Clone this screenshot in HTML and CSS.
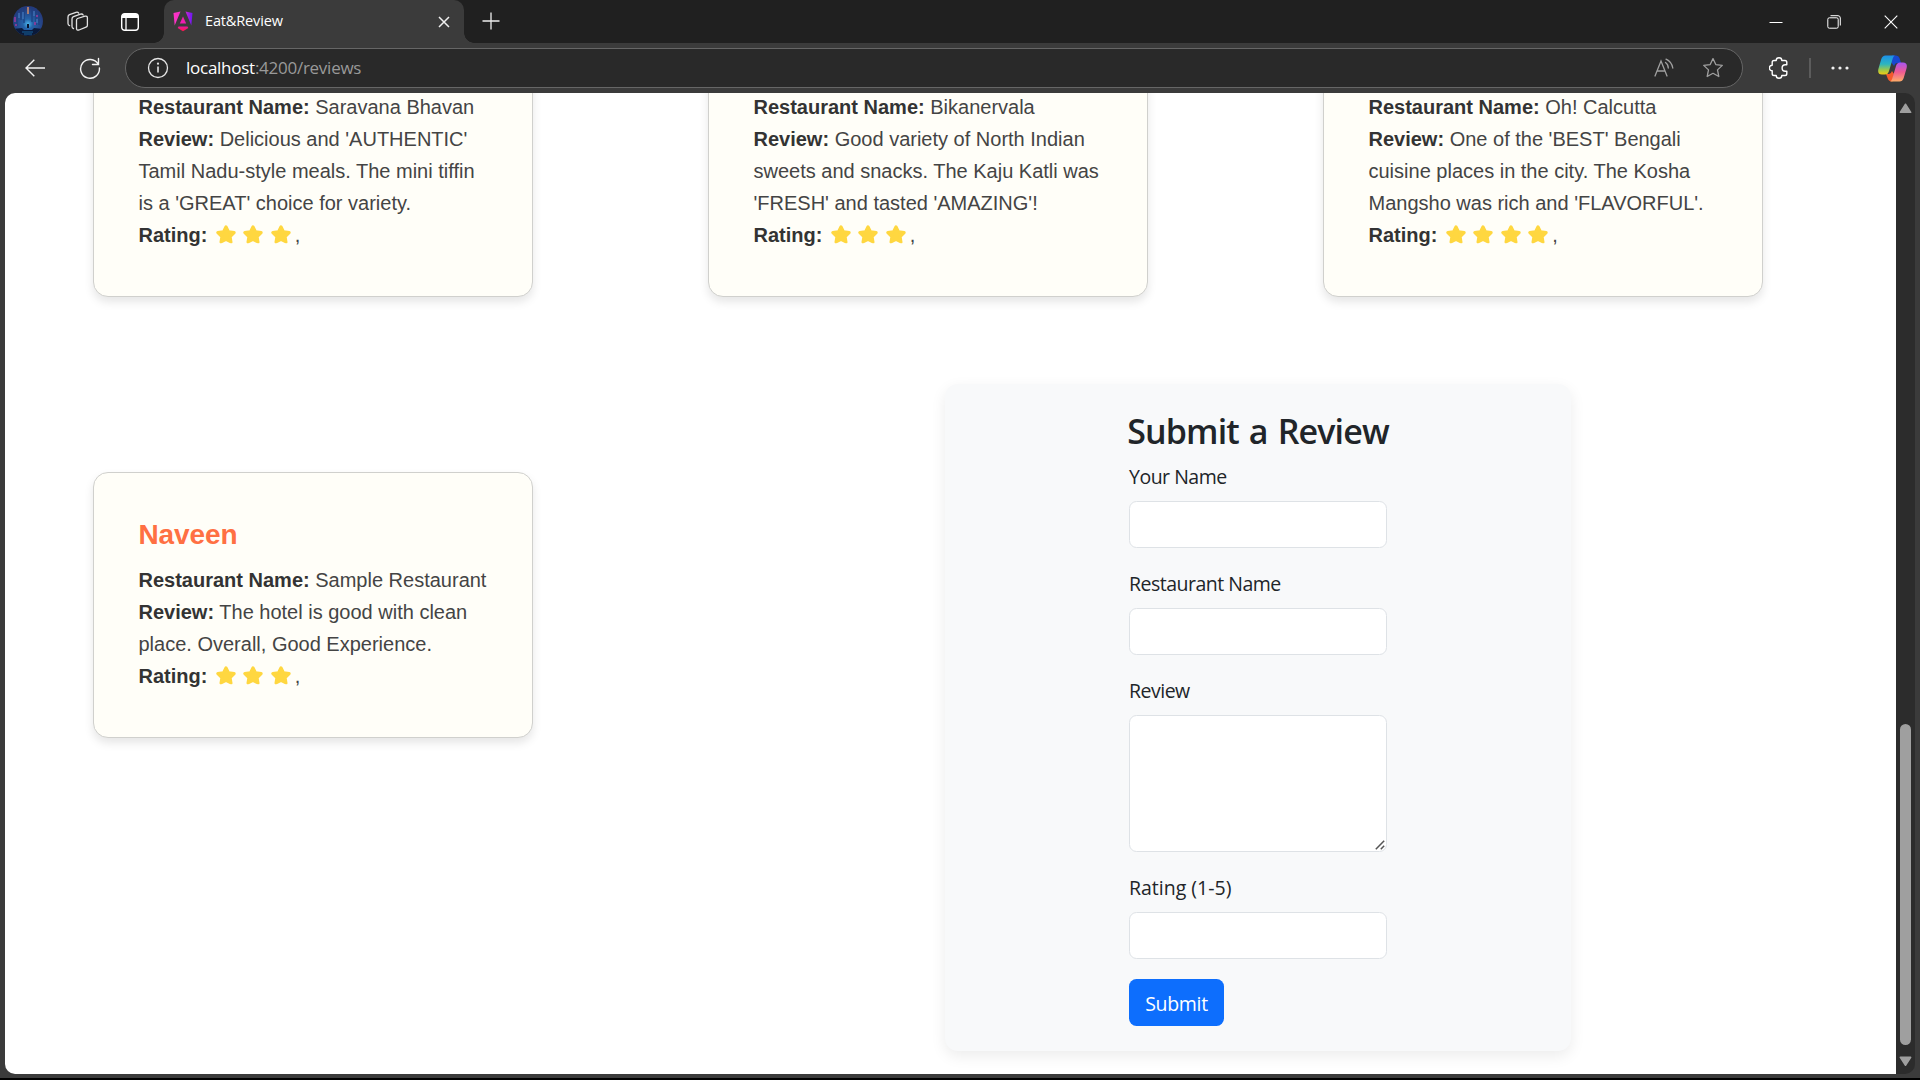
FILE: index.html
```html
<!DOCTYPE html>
<html lang="en">
<head>
<meta charset="utf-8">
<title>Eat&amp;Review</title>
<link rel="stylesheet" href="styles.css">
</head>
<body>
<svg class="defs" width="0" height="0">
  <symbol id="star" viewBox="0 0 20 18.500"><path d="M10 1.800l2.500 4.900 5.700.9-4.100 4 .9 5.400-5-2.500-5 2.500.9-5.400-4.100-4 5.700-.9z" fill="currentColor" stroke="currentColor" stroke-width="3" stroke-linejoin="round"/></symbol>
</svg>
<div class="browser">
  <header class="tabstrip">
    <svg class="avatar" width="30" height="30" viewBox="0 0 30 30">
      <defs><clipPath id="disc"><circle cx="15" cy="15" r="15"/></clipPath>
      <radialGradient id="glow" cx=".5" cy=".6" r=".55"><stop offset="0" stop-color="#4bb4ea"/><stop offset=".3" stop-color="#2462a8"/><stop offset="1" stop-color="#26397a"/></radialGradient></defs>
      <g clip-path="url(#disc)"><rect width="30" height="30" fill="url(#glow)"/>
      <path d="M4 3v17M8 0v14M11 2v15M19 1v15M23 2v17M26 5v14" stroke="#1c4080" stroke-width="1.200"/>
      <path d="M15 1v7" stroke="#a77b70" stroke-width="2"/><path d="M6 7v5M21 5v5M24 13v4M10 6v7" stroke="#4b83c9"/>
      <path d="M2 11v5M3 18v2M24 9v2M22 16v3" stroke="#a13a9b" stroke-width="1.500"/>
      <path d="M0 23l9-1 2 2h8l2-2 9 1v7H0z" fill="#0a1a3a"/><path d="M9 26h11M11 28h8" stroke="#17629a"/><path d="M14 18h2v4h-2z" fill="#07142f"/></g>
    </svg>
    <svg class="workspaces" width="22" height="22" viewBox="0 0 22 22"><g fill="none" stroke="#e2e2e2" stroke-width="1.300" stroke-linejoin="round" stroke-linecap="round"><path d="M10.500 7.500l7.500-2.300q2.400-.5 2.400 1.700v7.300q0 1.500-1.400 2l-7 2.800q-2.500.7-2.500-1.700V9.300q0-1.400 1-1.800z"/><path d="M6.500 17.500q-1.500-.3-1.500-2V8q0-1.700 1.500-2.300l7-2.500q1.800-.6 2.700.8"/><path d="M2.600 14.600Q1 14.300 1 12.600V6q0-1.700 1.500-2.300l6.500-2.400q1.800-.6 2.700.8"/></g></svg>
    <svg class="tabactions" width="18" height="18" viewBox="0 0 18 18"><rect x=".7" y=".7" width="16.600" height="16.600" rx="3" fill="none" stroke="#fff" stroke-width="1.400"/><path d="M1 5V3q0-2 2-2h12q2 0 2 2v2z" fill="#fff"/><path d="M5 5v12" stroke="#fff" stroke-width="1.300"/></svg>
    <div class="tab">
      <svg width="20" height="21" viewBox="0 0 20 21"><defs><linearGradient id="ng" x1="0" y1="0" x2="1" y2="0"><stop offset="0" stop-color="#ff35c4"/><stop offset=".5" stop-color="#e82ac8"/><stop offset="1" stop-color="#6a16f5"/></linearGradient><linearGradient id="nb" x1="0" y1="0" x2="0" y2="1"><stop offset="0" stop-color="#e818a0"/><stop offset="1" stop-color="#ff1744"/></linearGradient></defs>
      <path d="M.5 2L7.500.4 1.700 14.500zM12.500.4L19.500 2l-1.200 12.500z" fill="url(#ng)"/><path d="M10 5.500l3.200 7H6.800z" fill="#f01eb0"/><path d="M5.500 15.500h9l.8 1.600L10 20.300l-5.300-3.200z" fill="url(#nb)"/></svg>
      <span class="tab-title">Eat&amp;Review</span>
      <svg class="tab-close" width="12" height="12" viewBox="0 0 12 12"><path d="M1 1l10 10M11 1L1 11" stroke="#f0f0f0" stroke-width="1.500"/></svg>
    </div>
    <svg class="newtab" width="18" height="18" viewBox="0 0 18 18"><path d="M9 .5v17M.5 9h17" stroke="#eee" stroke-width="1.300"/></svg>
    <div class="window-controls">
      <svg width="14" height="14" viewBox="0 0 14 14"><path d="M.5 7.500h13" stroke="#fff"/></svg>
      <svg width="14" height="14" viewBox="0 0 14 14"><g fill="none" stroke="#fff"><rect x=".8" y="2.800" width="10.400" height="10.400" rx="1.500"/><path d="M3.500.7h7.500q2.300 0 2.300 2.300v7.500"/></g></svg>
      <svg width="14" height="14" viewBox="0 0 14 14"><path d="M.7.7l12.600 12.600M13.300.7L.7 13.300" stroke="#fff" stroke-width="1.100"/></svg>
    </div>
  </header>
  <nav class="toolbar">
    <svg class="back" width="20" height="18" viewBox="0 0 20 18"><path d="M9.300.7L1 9l8.300 8.300M1 9h19" fill="none" stroke="#f2f2f2" stroke-width="1.400"/></svg>
    <svg class="reload" width="22" height="22" viewBox="0 0 22 22"><path d="M19.200 7.200A9.400 9.400 0 1 0 20.400 11M19.500 1.500v6h-6" fill="none" stroke="#f2f2f2" stroke-width="1.400" stroke-linecap="round"/></svg>
    <div class="address">
      <svg width="22" height="22" viewBox="0 0 22 22"><circle cx="11" cy="11" r="9.500" fill="none" stroke="#e5e5e5" stroke-width="1.300"/><path d="M11 9.500v6" stroke="#e5e5e5" stroke-width="1.600"/><circle cx="11" cy="6.700" r="1.100" fill="#e5e5e5"/></svg>
      <span class="url"><b>localhost</b>:4200/reviews</span>
      <svg class="read" width="20" height="20" viewBox="0 0 20 20"><g fill="none" stroke="#a0a0a0" stroke-width="1.300" stroke-linecap="round"><path d="M1 18L7 3l6 15M3 13h8"/><path d="M11.500 4.500q2.800 2 2.800 5.500M12 1.200q5.700 2.600 6.800 8.800"/></g></svg>
      <svg class="favorite" width="22" height="22" viewBox="0 0 22 22"><path d="M11 1.600l2.800 6 6.500.8-4.800 4.500 1.300 6.600L11 16.300l-5.800 3.200 1.300-6.600-4.800-4.500 6.500-.8z" fill="none" stroke="#a0a0a0" stroke-width="1.300" stroke-linejoin="round"/></svg>
    </div>
    <svg class="extensions" width="20" height="22" viewBox="0 0 20 22"><path d="M5 3.500h2.200a2.800 2.800 0 0 1 5.600 0H16q1.800 0 1.800 1.800v2.500h-1.500a3.200 3.200 0 0 0 0 6.400h1.500v2.500q0 1.800-1.800 1.800h-3.200a2.800 2.800 0 0 1-5.600 0H5q-1.800 0-1.800-1.800v-2.900a2.800 2.800 0 0 1 0-5.600V5.300q0-1.800 1.800-1.800z" fill="none" stroke="#fff" stroke-width="1.400" stroke-linejoin="round"/></svg>
    <span class="divider"></span>
    <svg class="more" width="18" height="4" viewBox="0 0 18 4"><g fill="#f2f2f2"><circle cx="2" cy="2" r="1.600"/><circle cx="9" cy="2" r="1.600"/><circle cx="16" cy="2" r="1.600"/></g></svg>
    <svg class="copilot" width="29" height="27" viewBox="0 0 29 27"><defs><linearGradient id="ca" x1="0" y1="0" x2="0" y2="1"><stop offset="0" stop-color="#1c8fe8"/><stop offset=".45" stop-color="#2cb5c0"/><stop offset=".75" stop-color="#9bc84c"/><stop offset="1" stop-color="#f2cb12"/></linearGradient><linearGradient id="cb" x1="0" y1="0" x2="0" y2="1"><stop offset="0" stop-color="#a855f2"/><stop offset=".5" stop-color="#ef5a93"/><stop offset="1" stop-color="#ffad68"/></linearGradient></defs>
      <path d="M14 .5h4q2.700 0 3.500 2.500l1.500 5h-4q-2 0-3 3L13 7z" fill="#1848d0"/><path d="M8 19h3q2 0 3-3l2 3-1.500 7.500q-3.800.2-4.800-3z" fill="#f45a2c"/>
      <path d="M7.500.5h9.300q-1.300.5-2 2.700L11 16q-1 3.500-4 3.500H4q-5 0-3.500-6L3.300 4Q4.500.5 7.500.5z" fill="url(#ca)"/><path d="M21.500 26.500h-9.300q1.300-.5 2-2.700L18 11q1-3.500 4-3.500h3q5 0 3.500 6L25.700 23q-1.200 3.500-4.200 3.500z" fill="url(#cb)"/></svg>
  </nav>
  <div class="window">
    <main class="page">
      <section class="cards">
        <article class="card"><p><strong>Restaurant Name:</strong> Saravana Bhavan<br><strong>Review:</strong> Delicious and 'AUTHENTIC'<br>Tamil Nadu-style meals. The mini tiffin<br>is a 'GREAT' choice for variety.</p>
          <div class="rating"><strong>Rating:</strong><span class="stars"><svg><use href="#star"/></svg><svg><use href="#star"/></svg><svg><use href="#star"/></svg></span>,</div></article>
        <article class="card"><p><strong>Restaurant Name:</strong> Bikanervala<br><strong>Review:</strong> Good variety of North Indian<br>sweets and snacks. The Kaju Katli was<br>'FRESH' and tasted 'AMAZING'!</p>
          <div class="rating"><strong>Rating:</strong><span class="stars"><svg><use href="#star"/></svg><svg><use href="#star"/></svg><svg><use href="#star"/></svg></span>,</div></article>
        <article class="card"><p><strong>Restaurant Name:</strong> Oh! Calcutta<br><strong>Review:</strong> One of the 'BEST' Bengali<br>cuisine places in the city. The Kosha<br>Mangsho was rich and 'FLAVORFUL'.</p>
          <div class="rating"><strong>Rating:</strong><span class="stars"><svg><use href="#star"/></svg><svg><use href="#star"/></svg><svg><use href="#star"/></svg><svg><use href="#star"/></svg></span>,</div></article>
      </section>
      <section class="lower">
        <article class="card"><h3>Naveen</h3><p><strong>Restaurant Name:</strong> Sample Restaurant<br><strong>Review:</strong> The hotel is good with clean<br>place. Overall, Good Experience.</p>
          <div class="rating"><strong>Rating:</strong><span class="stars"><svg><use href="#star"/></svg><svg><use href="#star"/></svg><svg><use href="#star"/></svg></span>,</div></article>
        <form class="review-form">
          <h2>Submit a Review</h2>
          <label for="name">Your Name</label><input id="name" type="text">
          <label for="restaurant">Restaurant Name</label><input id="restaurant" type="text">
          <label for="review">Review</label>
          <div class="textarea"><textarea id="review"></textarea><svg class="grip" width="10" height="10" viewBox="0 0 10 10"><path d="M.8 9.200L9.200.8M5.800 9.200L9.200 5.800" stroke="#555" stroke-width="1.500"/></svg></div>
          <label class="rating-label" for="rating">Rating (1-5)</label><input id="rating" type="text">
          <button type="button">Submit</button>
        </form>
      </section>
    </main>
    <aside class="scrollbar">
      <svg width="13" height="11" viewBox="0 0 13 11"><path d="M6.500 1.200L11.700 9.300H1.300z" fill="#9f9f9f" stroke="#9f9f9f" stroke-width="1.500" stroke-linejoin="round"/></svg>
      <span class="thumb"></span>
      <svg width="13" height="11" viewBox="0 0 13 11"><path d="M6.500 9.300L11.700 1.300H1.300z" fill="#9f9f9f" stroke="#9f9f9f" stroke-width="1.500" stroke-linejoin="round"/></svg>
    </aside>
  </div>
</div>
</body>
</html>
```
FILE: styles.css
```css
* { box-sizing: border-box; }
body { margin: 0; background: #000; overflow: hidden; }
svg { display: block; flex: none; }
.defs { position: absolute; }
h2, h3, p { margin: 0; }

.browser { width: 1920px; height: 1078px; background: #3b3b3b; display: flex; flex-direction: column; font-family: "Open Sans", "Noto Sans", sans-serif; }

.tabstrip { height: 43px; background: #202020; display: flex; align-items: center; padding-left: 13px; }
.avatar { margin-bottom: 1px; }
.workspaces { margin-left: 24px; }
.tabactions { margin-left: 32px; }
.tab { position: relative; width: 300px; height: 43px; margin-left: 25px; padding: 0 14px 0 9px; border-radius: 10px 10px 0 0; background: #3b3b3b; display: flex; align-items: center; color: #fff; }
.tab::before, .tab::after { content: ""; position: absolute; bottom: 0; width: 10px; height: 10px; }
.tab::before { left: -10px; background: radial-gradient(circle at 0 0, transparent 9.500px, #3b3b3b 10px); }
.tab::after { right: -10px; background: radial-gradient(circle at 100% 0, transparent 9.500px, #3b3b3b 10px); }
.tab-title { margin-left: 12px; font-size: 14.500px; letter-spacing: -.15px; line-height: 20px; padding-bottom: 2px; }
.tab-close { margin-left: auto; }
.newtab { margin: 0 0 2px 18px; }
.window-controls { margin-left: auto; padding-right: 22px; display: flex; gap: 43.500px; }

.toolbar { height: 50px; display: flex; align-items: center; padding-left: 25px; }
.reload { margin-left: 34px; }
.address { width: 1618px; height: 40px; margin-left: 24px; border: 1px solid #666; border-radius: 20px; background: #292929; display: flex; align-items: center; padding: 0 18px 0 21px; }
.url { margin-left: 17px; color: #999; font-size: 17px; letter-spacing: -.26px; line-height: 24px; padding-bottom: 1px; }
.url b { color: #fff; font-weight: 400; }
.read { margin-left: auto; }
.favorite { margin-left: 28px; }
.extensions { margin-left: 26px; }
.divider { width: 2px; height: 20px; margin-left: 20px; background: #5c5c5c; }
.more { margin-left: 20px; }
.copilot { margin-left: 29px; }

.window { width: 1910px; height: 981px; margin-left: 5px; border-radius: 10px; overflow: hidden; background: #2c2c2c; display: flex; }
.page { width: 1891px; height: 981px; overflow: hidden; background: #fff; padding-left: 88px; }
.cards { display: flex; gap: 175px; margin-top: -48px; }
.card { width: 440px; flex: none; padding: 45px 0 45px 44.500px; border: 1px solid #d0d0cd; border-radius: 15px; background: #fffef8; box-shadow: 0 5px 10px rgba(0, 0, 0, .1); color: #444; font: 20px/32px "Liberation Sans", Arial, sans-serif; white-space: nowrap; }
.card strong { color: #333; }
.card h3 { color: #ff7043; font-size: 28px; letter-spacing: -.1px; line-height: 34px; margin-bottom: 12px; }
.rating { display: flex; }
.stars { display: flex; align-items: center; gap: 7.400px; margin: 0 4px 0 8.700px; padding-bottom: 1px; color: #ffd740; }
.stars svg { width: 20px; height: 18.500px; }

.lower { display: flex; align-items: flex-start; margin-top: 87px; }
.lower .card { margin-top: 88px; }
.review-form { width: 626px; height: 667px; margin-left: 412px; padding: 26px 184px 24px; border-radius: 13px; background: #f8f9fa; box-shadow: 0 5px 15px rgba(0, 0, 0, .08); color: #212529; display: flex; flex-direction: column; }
.review-form h2 { align-self: center; font-size: 34px; line-height: 42px; font-weight: 600; letter-spacing: -.85px; word-spacing: 2px; margin-bottom: 10px; white-space: nowrap; }
.review-form label { font-size: 19.500px; letter-spacing: -.5px; line-height: 30px; margin-bottom: 9px; }
.review-form .rating-label { letter-spacing: 0; }
.review-form input, .review-form textarea { display: block; width: 258px; height: 47px; margin: 0 0 21px; border: 1px solid #dee2e6; border-radius: 7.500px; background: #fff; flex: none; }
.textarea { position: relative; margin-bottom: 21px; }
.review-form .textarea textarea { height: 137px; margin: 0; resize: none; }
.grip { position: absolute; right: 2px; bottom: 2px; }
.review-form button { width: 95px; height: 47px; margin-top: -1px; padding: 2px 0 0; border: 0; border-radius: 7.500px; background: #0d6efd; color: #fff; font: 19.500px/30px "Open Sans", sans-serif; letter-spacing: -.3px; }

.scrollbar { width: 19px; padding: 10px 0 7px; display: flex; flex-direction: column; align-items: center; }
.thumb { width: 11px; height: 321px; margin: auto 0 11px; border-radius: 6px; background: #9f9f9f; }
```
